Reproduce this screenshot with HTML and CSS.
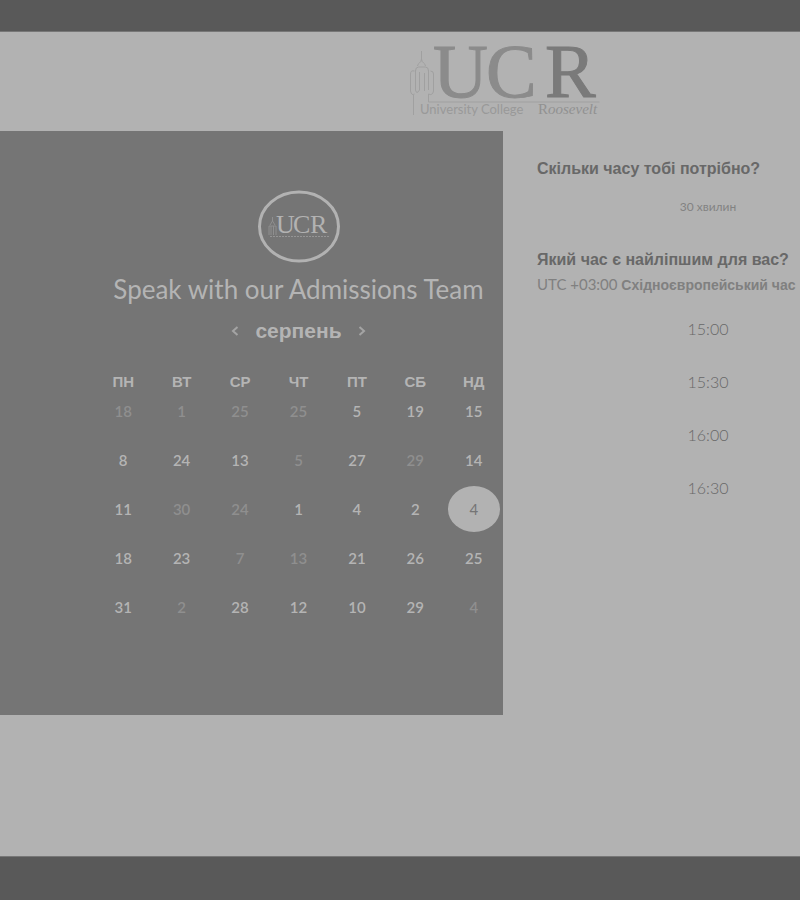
FILE: index.html
```html
<!DOCTYPE html>
<html lang="uk">
<head>
<meta charset="utf-8">
<meta name="viewport" content="width=device-width, initial-scale=1">
<title>Speak with our Admissions Team</title>
<link rel="stylesheet" href="styles.css">
</head>
<body>
<div class="topbar"></div>
<header class="brand">
  <svg class="brand-logo" width="196" height="99" viewBox="0 -11 196 99" role="img" aria-label="University College Roosevelt">
    <g class="tower">
      <path d="M15.500 8v9M11.500 23c0-3 4-3 4-7 0 4 4 4 4 7M9.500 28q0-4 3-4h7q3 0 3 4M9.500 27v20q1 5 4 0V29M22.500 27v20M18.500 30v18M8.500 28q-4-1-4 3v17q1 5 4 3M24.500 28q3 0 3 3v17q-1 5-5 3v8h171M7.500 52v20"/>
    </g>
    <g class="brand-name">
      <text class="brand-soft" x="27" y="54">U</text>
      <text class="brand-soft" x="80" y="54">C</text>
      <text class="brand-strong" x="139" y="54">R</text>
    </g>
    <text class="brand-sub" x="14" y="71">University College</text>
    <text class="brand-sub-serif" x="132" y="71">R<tspan class="slanted">oosevelt</tspan></text>
  </svg>
</header>
<main class="booking">
  <section class="calendar">
    <svg class="badge" width="82" height="73" viewBox="0 0 82 73" role="img" aria-label="UCR">
      <ellipse class="badge-ring" cx="41" cy="36.500" rx="39.500" ry="34.500"/>
      <path class="badge-tower" d="M14.500 27v4M12 35l2.500-4 2.500 4M11 45V36h7v9M13 36v9M15.500 36v9"/>
      <g class="badge-name">
        <text x="18" y="43">U</text>
        <text x="35" y="43">C</text>
        <text x="52" y="43">R</text>
      </g>
      <path class="badge-line" d="M12 46.500h59"/>
    </svg>
    <h1 class="title">Speak with our Admissions Team</h1>
    <div class="month">
      <button class="arrow" type="button" aria-label="Попередній місяць"><svg width="8" height="10" viewBox="0 0 8 10"><path d="M6.500 1L2 5l4.500 4"/></svg></button>
      <h2 class="month-name">серпень</h2>
      <button class="arrow" type="button" aria-label="Наступний місяць"><svg width="8" height="10" viewBox="0 0 8 10"><path d="M1.500 1L6 5l-4.500 4"/></svg></button>
    </div>
    <table class="days">
      <thead>
        <tr><th>ПН</th><th>ВТ</th><th>СР</th><th>ЧТ</th><th>ПТ</th><th>СБ</th><th>НД</th></tr>
      </thead>
      <tbody>
        <tr><td><button disabled>18</button></td><td><button disabled>1</button></td><td><button disabled>25</button></td><td><button disabled>25</button></td><td><button>5</button></td><td><button>19</button></td><td><button>15</button></td></tr>
        <tr><td><button>8</button></td><td><button>24</button></td><td><button>13</button></td><td><button disabled>5</button></td><td><button>27</button></td><td><button disabled>29</button></td><td><button>14</button></td></tr>
        <tr><td><button>11</button></td><td><button disabled>30</button></td><td><button disabled>24</button></td><td><button>1</button></td><td><button>4</button></td><td><button>2</button></td><td><button class="selected" aria-pressed="true">4</button></td></tr>
        <tr><td><button>18</button></td><td><button>23</button></td><td><button disabled>7</button></td><td><button disabled>13</button></td><td><button>21</button></td><td><button>26</button></td><td><button>25</button></td></tr>
        <tr><td><button>31</button></td><td><button disabled>2</button></td><td><button>28</button></td><td><button>12</button></td><td><button>10</button></td><td><button>29</button></td><td><button disabled>4</button></td></tr>
      </tbody>
    </table>
  </section>
  <section class="options">
    <div class="options-body">
      <h2 class="question">Скільки часу тобі потрібно?</h2>
      <button class="duration" type="button">30 хвилин</button>
      <h2 class="question">Який час є найліпшим для вас?</h2>
      <p class="zone">UTC +03:00 <strong>Східноєвропейський час</strong></p>
      <ul class="slots">
        <li><button class="slot" type="button">15:00</button></li>
        <li><button class="slot" type="button">15:30</button></li>
        <li><button class="slot" type="button">16:00</button></li>
        <li><button class="slot" type="button">16:30</button></li>
      </ul>
    </div>
  </section>
</main>
<footer class="bottombar"></footer>
</body>
</html>
```
FILE: styles.css
```css
* { box-sizing: border-box; }

body {
  margin: 0;
  min-height: 100vh;
  display: flex;
  flex-direction: column;
  overflow-x: hidden;
  background: #b2b2b2;
  color: #686868;
  font-family: Lato, "Liberation Sans", sans-serif;
}

button {
  padding: 0;
  border: 0;
  background: none;
  color: inherit;
  font: inherit;
}

h1, h2, p, ul { margin: 0; }

.topbar { height: 32px; background: #595959; border-bottom: 1px solid #777; }

.bottombar {
  height: 44px;
  margin-top: auto;
  background: #595959;
  border-top: 1px solid #777;
}

.brand {
  display: flex;
  justify-content: center;
  padding-left: 208px;
}

.brand-logo, .badge { display: block; }
.tower path { fill: none; stroke: #a0a0a0; }
.brand-name { font: 76px "Liberation Serif", serif; }
.brand-soft { fill: #8b8b8b; stroke: #8b8b8b; }
.brand-strong { fill: #7a7a7a; stroke: #7a7a7a; }
.brand-sub { font: 13px Lato, sans-serif; fill: #999; }
.brand-sub-serif { font: 15px "Liberation Serif", serif; fill: #919191; }
.slanted { font-style: italic; }

.booking {
  display: grid;
  grid-template-columns: 503fr 297fr;
}

.calendar {
  display: flex;
  flex-direction: column;
  align-items: center;
  padding: 59px 0 69px 94px;
  background: #757575;
  color: #b4b4b4;
}

.badge-ring { fill: none; stroke: #b2b2b2; stroke-width: 3; }
.badge-tower { fill: none; stroke: #8f8f8f; }
.badge-name { font: 26px "Liberation Serif", serif; fill: #b2b2b2; }
.badge-line { fill: none; stroke: #959595; stroke-dasharray: 2 1; }

.title {
  margin-top: 10px;
  font-size: 26px;
  font-weight: 400;
  line-height: 32px;
  white-space: nowrap;
}

.month {
  display: flex;
  align-items: center;
  gap: 16px;
  margin-top: 14px;
}

.month-name { font: bold 21px/24px "Liberation Sans", sans-serif; }

.arrow { display: flex; }
.arrow path { fill: none; stroke: #a4a4a4; stroke-width: 2; }

.days {
  width: 100%;
  margin-top: 29px;
  table-layout: fixed;
  border-collapse: collapse;
}

.days th, .days td {
  height: 49px;
  padding: 0;
  vertical-align: top;
  text-align: center;
  font-size: 15px;
  font-weight: 600;
  line-height: 20px;
}

.days th { height: 29px; font-family: "Liberation Sans", sans-serif; font-weight: 700; }
.days button { width: 100%; height: 20px; }
.days button:disabled { color: #8f8f8f; }

.days .selected {
  position: relative;
  isolation: isolate;
  color: #757575;
  font-weight: 400;
}

.days .selected::before {
  content: "";
  position: absolute;
  z-index: -1;
  inset: -13px 3px;
  border-radius: 50%;
  background: #b2b2b2;
}

.options { min-width: 0; overflow: hidden; padding: 28px 0 0 34px; }
.options-body { min-width: 342px; white-space: nowrap; }

.question { font: bold 16px/20px "Liberation Sans", sans-serif; }

.duration {
  display: block;
  width: 100%;
  margin: 20px 0 35px;
  font-size: 12px;
  line-height: 16px;
  color: #828282;
}

.zone { margin-top: 4px; font-size: 15px; line-height: 20px; color: #808080; }
.zone strong { font: bold 14px "Liberation Sans", sans-serif; }

.slots {
  display: grid;
  gap: 33px;
  margin-top: 25px;
  padding: 0;
  list-style: none;
}

.slot {
  width: 100%;
  font-size: 16px;
  font-weight: 300;
  line-height: 20px;
}
```
